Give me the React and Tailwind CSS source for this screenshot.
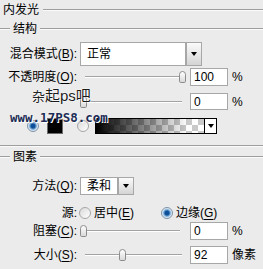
import React from "react";

function Rule({ className = "" }) {
  return <div className={"h-[2px] border-t border-b border-t-[#9e9e9e] border-b-[#fafafa] " + className} />;
}

function Label({ children, w = "w-[77px]" }) {
  return <div className={w + " shrink-0 text-right whitespace-nowrap"}>{children}</div>;
}

function U({ children }) {
  return <span className="underline underline-offset-[2px]">{children}</span>;
}

function Arrow({ h }) {
  return (
    <div className={"w-[16px] " + h + " shrink-0 border border-[#a7a7a7] bg-[linear-gradient(#fbfbfb,#d4d4d4)] flex items-center justify-center"}>
      <div className="w-0 h-0 border-l-[3.5px] border-r-[3.5px] border-t-[4px] border-l-transparent border-r-transparent border-t-black" />
    </div>
  );
}

function Select({ text, w, h }) {
  return (
    <div className="flex ml-[3px]">
      <div className={w + " " + h + " bg-white border border-[#a7a7a7] flex items-center pl-[6px]"}>{text}</div>
      <Arrow h={h} />
    </div>
  );
}

function Slider({ pos, lineFrom = "left-[5px]", lineTo = "right-[4px]" }) {
  return (
    <div className="relative w-[106px] h-full ml-[3px]">
      <div className={"absolute top-1/2 -translate-y-1/2 h-[2px] border-t border-b border-t-[#a3a3a3] border-b-white " + lineFrom + " " + lineTo} />
      <div className={"absolute top-1/2 -translate-y-1/2 w-[7px] h-[12px] rounded-t-[4px] rounded-b-[2px] border border-[#8c8c8c] bg-[linear-gradient(#ffffff,#d9d9d9)] " + pos} />
    </div>
  );
}

function Input({ value, h = "h-[18px]" }) {
  return (
    <div className={"w-[38px] " + h + " bg-white border border-[#a7a7a7] flex items-center pl-[3px] ml-[4px] shrink-0"}>{value}</div>
  );
}

function Radio({ on }) {
  return on ? (
    <div className="w-[12px] h-[12px] rounded-full border border-[#7f93a8] bg-[radial-gradient(circle,#0e4f97_0_28%,#5f98cf_42%,#cfe0ef_62%,#f4f7fa_80%)] shrink-0" />
  ) : (
    <div className="w-[12px] h-[12px] rounded-full border border-[#a6a6a6] bg-[linear-gradient(135deg,#d9d9d9,#ffffff)] shrink-0" />
  );
}

export default function App() {
  return (
    <div className="w-[263px] h-[269px] overflow-hidden bg-[#ebebeb] text-[12px] leading-none text-black font-['Liberation_Sans','Noto_Sans_CJK_SC',sans-serif]">
      <div className="relative">
        <div className="h-[19px] flex items-center pl-[3px]">
          <span>内发光</span>
          <Rule className="flex-1 ml-[4px]" />
        </div>
        <div className="h-[20px] flex items-center">
          <Rule className="w-[10px]" />
          <span className="px-[3px]">结构</span>
          <Rule className="flex-1" />
        </div>
        <div className="mt-[3px] h-[24px] flex items-center">
          <Label>混合模式(<U>B</U>):</Label>
          <Select text="正常" w="w-[106px]" h="h-[24px]" />
        </div>
        <div className="mt-[2px] h-[18px] flex items-center">
          <Label>不透明度(<U>O</U>):</Label>
          <Slider pos="right-0" lineTo="right-[6px]" />
          <Input value="100" />
          <span className="ml-[4px]">%</span>
        </div>
        <div className="mt-[7px] h-[17px] flex items-center">
          <Label>{""}</Label>
          <Slider pos="left-0" lineFrom="left-[7px]" />
          <Input value="0" h="h-[17px]" />
          <span className="ml-[4px]">%</span>
        </div>
        <div className="mt-[8px] h-[16px] flex items-center pl-[27px]">
          <Radio on />
          <div className="ml-[8px] w-[16px] h-[16px] bg-black border border-[#6b6b6b]" />
          <div className="ml-[14px]"><Radio /></div>
          <div className="ml-[6px] flex h-[16px] border border-black">
            <div className="w-[108px] h-full bg-[image:linear-gradient(to_right,#000,rgba(0,0,0,0)_85%),repeating-conic-gradient(#c9c9c9_0_25%,#ffffff_0_50%)] bg-[length:100%_100%,12px_12px]" />
            <div className="w-[12px] h-full bg-white border-l border-black flex items-center justify-center">
              <div className="w-0 h-0 border-l-[3.5px] border-r-[3.5px] border-t-[4px] border-l-transparent border-r-transparent border-t-black" />
            </div>
          </div>
        </div>
        <div className="absolute left-[32px] top-[88px] flex items-end whitespace-nowrap [text-shadow:0_0_2px_#fff,0_0_1px_#fff,0_0_1px_#fff]">
          <span className="text-[13px] text-[#222]">杂</span>
          <span className="text-[15px] text-[#1b1b1b]">起ps吧</span>
        </div>
        <div className="absolute left-[10px] top-[112px] text-[12.5px] font-bold text-[#1d2d55] font-['DejaVu_Sans_Mono',monospace] [text-shadow:1px_1px_0_#fff] whitespace-nowrap">
          www.17PS8.com
        </div>
      </div>

      <Rule className="mt-[11px]" />

      <div className="mt-[1px] h-[18px] flex items-center">
        <Rule className="w-[10px]" />
        <span className="px-[3px]">图素</span>
        <Rule className="flex-1" />
      </div>
      <div className="mt-[11px] h-[18px] flex items-center">
        <Label>方法(<U>Q</U>):</Label>
        <Select text="柔和" w="w-[38px]" h="h-[18px]" />
      </div>
      <div className="mt-[10px] h-[15px] flex items-center">
        <Label>源:</Label>
        <div className="ml-[2px]"><Radio /></div>
        <span className="ml-[3px]">居中(<U>E</U>)</span>
        <div className="ml-[27px]"><Radio on /></div>
        <span className="ml-[3px]">边缘(<U>G</U>)</span>
      </div>
      <div className="mt-[2px] h-[18px] flex items-center">
        <Label>阻塞(<U>C</U>):</Label>
        <Slider pos="left-0" lineFrom="left-[7px]" lineTo="right-[6px]" />
        <Input value="0" />
        <span className="ml-[4px]">%</span>
      </div>
      <div className="mt-[6px] h-[18px] flex items-center">
        <Label>大小(<U>S</U>):</Label>
        <Slider pos="left-[39px]" />
        <Input value="92" />
        <span className="ml-[4px]">像素</span>
      </div>
    </div>
  );
}
